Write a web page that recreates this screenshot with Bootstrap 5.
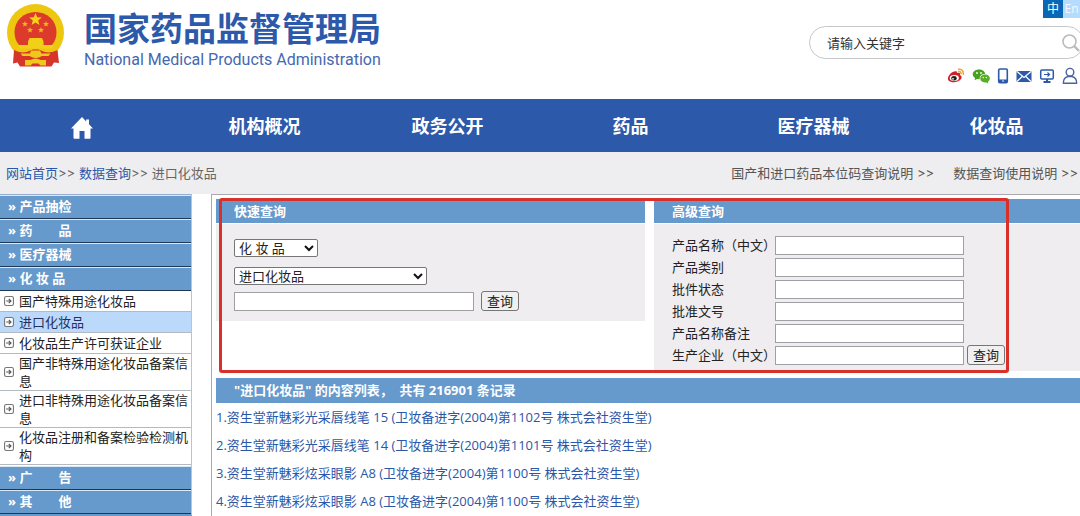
<!DOCTYPE html>
<html lang="zh-CN">
<head>
<meta charset="utf-8">
<meta name="viewport" content="width=device-width, initial-scale=1">
<title>国家药品监督管理局 - 数据查询</title>
<link href="https://cdn.jsdelivr.net/npm/bootstrap@5.3.0/dist/css/bootstrap.min.css" rel="stylesheet">
<style>
  :root { --bar: #6699cc; --brand: #2d59ab; --pane: #efedf0; --txtlink: #2a57a8; }
  body { font: 13px/18px "Open Sans", "Noto Sans CJK SC", sans-serif; color: #222; overflow-x: hidden; }
  a { text-decoration: none; }
  .site-head { height: 99px; overflow: hidden; }
  .brand-name { font-size: 33px; line-height: 40px; font-weight: 700; color: var(--brand); }
  .brand-en { font: 16px/22px Roboto, sans-serif; color: #4568b0; }
  .brand-text { padding: 9px 0 0 13px; }
  .tools { width: 271px; }
  .lang { height: 18px; }
  .lang a { width: 20px; line-height: 17px; text-align: center; font-size: 12px; color: #fff; background: #0868b5; }
  .lang a + a { background: #b5dcff; color: #f2f9ff; width: 17px; }
  .search { height: 33px; margin: 8px -4px 0 0; border: 1px solid #c5c7cb; border-radius: 17px; padding: 0 2px 0 15px; }
  .search input { border: 0; outline: 0; font-size: 13px; background: transparent; min-width: 0; }
  .search input::placeholder { color: #333; opacity: 1; }
  .search button { border: 0; background: none; padding: 0; }
  .quick-icons { margin: 8px 2px 0 0; gap: 7px; }
  .main-nav { background: var(--brand); overflow: hidden; height: 53px; }
  .main-nav ul { margin: 0 -8px 0 -10px; }
  .main-nav a { font-size: 18px; line-height: 54px; font-weight: 700; color: #fff; }
  .crumbs { background: #eeeef0; height: 42px; color: #666; padding: 0 2px 0 6px; font-family: Inter, "Noto Sans CJK SC", sans-serif; }
  .crumbs a { color: var(--txtlink); }
  .crumbs .help { color: #555; }
  .crumbs .helps { gap: 19px; }
  .side { width: 192px; border-top: 1px solid #9aaed0; border-right: 1px solid #b9c4d2; border-bottom: 2px solid var(--bar); }
  .side h2 { margin: 0; height: 24px; padding-left: 8px; font-size: 13px; line-height: 21px; font-weight: 700; white-space: pre; background: var(--bar); border-top: 1px solid #dbe8f5; border-bottom: 1px solid #1f3858; }
  .side h2 a { color: #fff; }
  .side ul { padding-bottom: 1px; }
  .side li { min-height: 21px; padding-left: 4px; gap: 5px; border-bottom: 1px solid #b4bac2; }
  .side li.on { background: #bbd9fb; }
  .side li a { color: #222; flex: 1; }
  .side li svg { flex: none; }
  .side .on a { color: #24305e; }
  .work { margin-left: 19px; border-left: 1px solid #a9a9b4; border-top: 1px solid #aaa8b0; padding: 4px 0 0 4px; min-width: 0; }
  .queries { display: grid; grid-template-columns: calc(50% - 3px) 1fr; gap: 9px; align-items: start; }
  .bar-title { margin: 0 0 1px; font-size: 13px; line-height: 24px; font-weight: 700; color: #fff; background: var(--bar); padding-left: 18px; }
  .pane { background: var(--pane); padding-left: 18px; }
  .outline-box { inset: -1px 71px -2px 3px; border: 3px solid #d8302b; border-radius: 3px; pointer-events: none; }
  .pane input { height: 19px; border: 1px solid #a0a0a4; padding: 0 4px; background: #fff; }
  .pane select { appearance: none; height: 18px; font-size: 13px; line-height: 16px; border: 1px solid #767676; border-radius: 2px; padding: 0 16px 0 4px; color: #222;
    background: #fff url("data:image/svg+xml,%3Csvg xmlns='http://www.w3.org/2000/svg' viewBox='0 0 10 7'%3E%3Cpath d='M1 1l4 4 4-4' fill='none' stroke='%23111' stroke-width='2'/%3E%3C/svg%3E") no-repeat right 3px center / 10px 7px; }
  .pane button { height: 20px; width: 38px; padding: 0; font-size: 13px; line-height: 16px; border: 1px solid #767676; border-radius: 3px; background: #f0f0f0; color: #222; }
  .fast { padding-top: 15px; padding-bottom: 10px; }
  .fast select { display: block; }
  .fast .kind { width: 84px; }
  .fast .source { width: 193px; margin-top: 10px; }
  .fast .term { width: 240px; }
  .fast .ask { margin-top: 6px; gap: 7px; }
  .deep { padding-top: 10px; padding-bottom: 5px; }
  .field { height: 22px; gap: 3px; }
  .field label { width: 100px; white-space: nowrap; }
  .field input { width: 189px; }
  .count-bar { margin: 7px 0 0; line-height: 25px; }
  .hits a { color: var(--txtlink); line-height: 28px; }
</style>
</head>
<body class="bg-white">

<svg class="d-none">
  <symbol id="go" viewBox="0 0 9 9"><rect x=".5" y=".5" width="8" height="8" rx="1.500" fill="#fff" stroke="#777"/><path d="M2 4.500h4M4.300 2.500l2 2-2 2" fill="none" stroke="#555"/></symbol>
</svg>

<header class="site-head d-flex justify-content-between">
  <a href="#" class="d-flex">
    <svg width="71" height="70" viewBox="0 0 71 70" role="img" aria-label="国徽">
      <circle cx="35.500" cy="32.500" r="28.500" fill="#eec711"/>
      <path d="M14.500 32a21 20 0 1 1 42 0q0 8-4.500 13H19q-4.500-5-4.500-13z" fill="#dc3a2b"/>
      <path d="M35.500 13l1.700 4.300 4.600.200-3.600 2.900 1.200 4.500-3.900-2.500-3.900 2.500 1.200-4.500-3.600-2.900 4.600-.200z" fill="#f7d21a"/>
      <g fill="#f0b51c"><path id="st" d="M25 21l.8 2 2.200.1-1.700 1.400.6 2.100-1.900-1.200-1.900 1.200.6-2.100-1.700-1.400 2.200-.1z"/><use href="#st" x="21"/><use href="#st" x="5" y="6"/><use href="#st" x="16" y="6"/></g>
      <path d="M29.500 38h12.500l1.500 3.500V45h9.500v3.500H18.500V45H28v-3.500z" fill="#f2cf18"/>
      <path d="M14 50q8 4.500 16.500 0.500l2.500-1h5.500l2.500 1q8 4 16.500-.5l1.500 13-5-.5-2.500 4H20l-2.500-4-4.500 1z" fill="#d5352b"/>
      <path d="M31 50.500h9l1.500 3h9l-2 2.500h-6.500q-6 4-12.500 0H22.500l-2-2.500h9.500zM25 60h5.500q5-3 10 0H46v5.500h-5.500l-2-2h-6l-2 2H25z" fill="#efc819"/>
    </svg>
    <span class="brand-text">
      <span class="brand-name d-block">国家药品监督管理局</span>
      <span class="brand-en d-block">National Medical Products Administration</span>
    </span>
  </a>
  <div class="tools">
    <div class="lang d-flex justify-content-end"><a href="#">中</a><a href="#">En</a></div>
    <form class="search d-flex align-items-center">
      <input class="flex-grow-1" type="text" aria-label="请输入关键字" placeholder="请输入关键字">
      <button type="button" aria-label="搜索"><svg width="20" height="20" viewBox="0 0 20 20" fill="none" stroke="#bbb" stroke-width="1.600"><circle cx="8.500" cy="8.500" r="6.500"/><path d="M13.200 13.200L18 18" stroke-width="2.400"/></svg></button>
    </form>
    <div class="quick-icons d-flex justify-content-end align-items-center">
      <a href="#" aria-label="微博"><svg class="d-block" width="18" height="18" viewBox="0 0 18 18"><path d="M7.500 4.500c1.500-.8 2.800-.2 2.400 1.500 2.200-.6 3.600.1 3 1.900 2.200.8 2.300 3 .5 4.900-3 3.200-9.700 3.200-12 .4C-.6 10.500 4 4.800 7.500 4.500z" fill="#cf2029"/><ellipse cx="7.300" cy="11" rx="4.600" ry="2.900" fill="#fff"/><ellipse cx="7" cy="11.200" rx="2.700" ry="2.200" fill="#222"/><circle cx="6" cy="11.800" r=".9" fill="#fff"/><path d="M11.500 2.200q4.800-.4 4.900 5M11.700 4.500q2.400-.1 2.400 2.300" fill="none" stroke="#eea62b" stroke-width="1.500" stroke-linecap="round"/></svg></a>
      <a href="#" aria-label="微信"><svg class="d-block" width="18" height="18" viewBox="0 0 18 18"><path d="M7 2.500c3.500 0 6 2 6.200 4.300-3.400.2-6 2.200-5.400 5.400L5 12l-2.500 1.300.6-2.200C-1.500 8 1 2.500 7 2.500z" fill="#48a21d"/><path d="M12.700 7.600c6 0 6.300 5.500 3.100 7.100l.5 1.800-2-1.100c-7.800.9-7.700-7.500-1.600-7.800z" fill="#56ae25"/><g fill="#fff"><circle cx="5" cy="6" r=".9"/><circle cx="9" cy="6" r=".9"/><circle cx="11.200" cy="10.500" r=".7"/><circle cx="14.300" cy="10.500" r=".7"/></g></svg></a>
      <a href="#" aria-label="移动端"><svg class="d-block" width="12" height="18" viewBox="0 0 12 18"><rect x="1.700" y="2" width="8.600" height="13.600" rx="1.200" fill="none" stroke="#2d59ab" stroke-width="1.600"/><path d="M2 12.500h8v3H2z" fill="#2d59ab"/><circle cx="6" cy="14" r=".8" fill="#fff"/></svg></a>
      <a href="#" aria-label="邮箱"><svg class="d-block" width="16" height="18" viewBox="0 0 16 18"><rect x=".5" y="4" width="15" height="11" rx="1" fill="#2d59ab"/><path d="M1 4.500l7 6 7-6M1 14.500l5.200-5M15 14.500l-5.200-5" fill="none" stroke="#fff" stroke-width="1.200"/></svg></a>
      <a href="#" aria-label="电脑端"><svg class="d-block" width="16" height="18" viewBox="0 0 16 18" fill="none" stroke="#2d59ab" stroke-width="1.500"><rect x="1.700" y="3" width="12.600" height="9" rx="1.200"/><path d="M5 7.500h5.500M8.500 5.500l2 2-2 2" stroke-width="1.200"/><path d="M8 12v2M4.500 15h7" stroke-width="2"/></svg></a>
      <a href="#" aria-label="用户"><svg class="d-block" width="16" height="18" viewBox="0 0 16 18" fill="none" stroke="#4a62a0" stroke-width="1.400"><circle cx="8" cy="5.200" r="3.800"/><path d="M1.300 16.300c0-4 1.500-6 4.700-6.800h4c3.200.8 4.700 2.800 4.700 6.800z" stroke-linejoin="round"/></svg></a>
    </div>
  </div>
</header>

<nav class="main-nav">
  <ul class="d-flex list-unstyled text-center">
    <li class="col"><a href="#" aria-label="首页"><svg width="22" height="22" viewBox="0 0 22 22" fill="#fff"><path d="M11 0L0 11.500h2.500V21q0 .8.800.8H8.500V14h5v7.800h5.200q.8 0 .8-.8v-9.500H22L18 7.300V2.500h-2.800v1.900z"/></svg></a></li>
    <li class="col"><a href="#">机构概况</a></li>
    <li class="col"><a href="#">政务公开</a></li>
    <li class="col"><a href="#">药品</a></li>
    <li class="col"><a href="#">医疗器械</a></li>
    <li class="col"><a href="#">化妆品</a></li>
  </ul>
</nav>

<div class="crumbs d-flex justify-content-between align-items-center">
  <div><a href="#">网站首页</a>&gt;&gt; <a href="#">数据查询</a>&gt;&gt; 进口化妆品</div>
  <div class="helps d-flex"><a class="help" href="#">国产和进口药品本位码查询说明 &gt;&gt;</a><a class="help" href="#">数据查询使用说明 &gt;&gt;</a></div>
</div>

<main class="d-flex">
  <aside class="side flex-shrink-0">
    <h2><a href="#">» 产品抽检</a></h2>
    <h2><a href="#">» 药　　品</a></h2>
    <h2><a href="#">» 医疗器械</a></h2>
    <h2><a href="#">» 化 妆 品</a></h2>
    <ul class="list-unstyled mb-0">
      <li class="d-flex align-items-center"><svg width="10" height="10"><use href="#go"/></svg><a href="#">国产特殊用途化妆品</a></li>
      <li class="d-flex align-items-center on"><svg width="10" height="10"><use href="#go"/></svg><a href="#">进口化妆品</a></li>
      <li class="d-flex align-items-center"><svg width="10" height="10"><use href="#go"/></svg><a href="#">化妆品生产许可获证企业</a></li>
      <li class="d-flex align-items-center"><svg width="10" height="10"><use href="#go"/></svg><a href="#">国产非特殊用途化妆品备案信息</a></li>
      <li class="d-flex align-items-center"><svg width="10" height="10"><use href="#go"/></svg><a href="#">进口非特殊用途化妆品备案信息</a></li>
      <li class="d-flex align-items-center"><svg width="10" height="10"><use href="#go"/></svg><a href="#">化妆品注册和备案检验检测机构</a></li>
    </ul>
    <h2><a href="#">» 广　　告</a></h2>
    <h2><a href="#">» 其　　他</a></h2>
  </aside>

  <div class="work flex-grow-1">
    <div class="queries position-relative">
      <form>
        <h3 class="bar-title">快速查询</h3>
        <div class="pane fast">
          <select class="kind" aria-label="类别"><option>化 妆 品</option></select>
          <select class="source" aria-label="数据库"><option>进口化妆品</option></select>
          <div class="ask d-flex align-items-center"><input class="term" type="text" aria-label="关键字"><button type="button">查询</button></div>
        </div>
      </form>
      <form>
        <h3 class="bar-title">高级查询</h3>
        <div class="pane deep">
          <div class="field d-flex align-items-center"><label for="f1">产品名称（中文）</label><input id="f1" type="text"></div>
          <div class="field d-flex align-items-center"><label for="f2">产品类别</label><input id="f2" type="text"></div>
          <div class="field d-flex align-items-center"><label for="f3">批件状态</label><input id="f3" type="text"></div>
          <div class="field d-flex align-items-center"><label for="f4">批准文号</label><input id="f4" type="text"></div>
          <div class="field d-flex align-items-center"><label for="f5">产品名称备注</label><input id="f5" type="text"></div>
          <div class="field d-flex align-items-center"><label for="f6">生产企业（中文）</label><input id="f6" type="text"><button type="button">查询</button></div>
        </div>
      </form>
      <div class="outline-box position-absolute"></div>
    </div>
    <h3 class="bar-title count-bar">"进口化妆品" 的内容列表，&nbsp; 共有 216901 条记录</h3>
    <ul class="hits list-unstyled mb-0">
      <li><a href="#">1.资生堂新魅彩光采唇线笔 15 (卫妆备进字(2004)第1102号 株式会社资生堂)</a></li>
      <li><a href="#">2.资生堂新魅彩光采唇线笔 14 (卫妆备进字(2004)第1101号 株式会社资生堂)</a></li>
      <li><a href="#">3.资生堂新魅彩炫采眼影 A8 (卫妆备进字(2004)第1100号 株式会社资生堂)</a></li>
      <li><a href="#">4.资生堂新魅彩炫采眼影 A8 (卫妆备进字(2004)第1100号 株式会社资生堂)</a></li>
    </ul>
  </div>
</main>
<script src="https://cdn.jsdelivr.net/npm/bootstrap@5.3.0/dist/js/bootstrap.bundle.min.js"></script>
</body>
</html>
